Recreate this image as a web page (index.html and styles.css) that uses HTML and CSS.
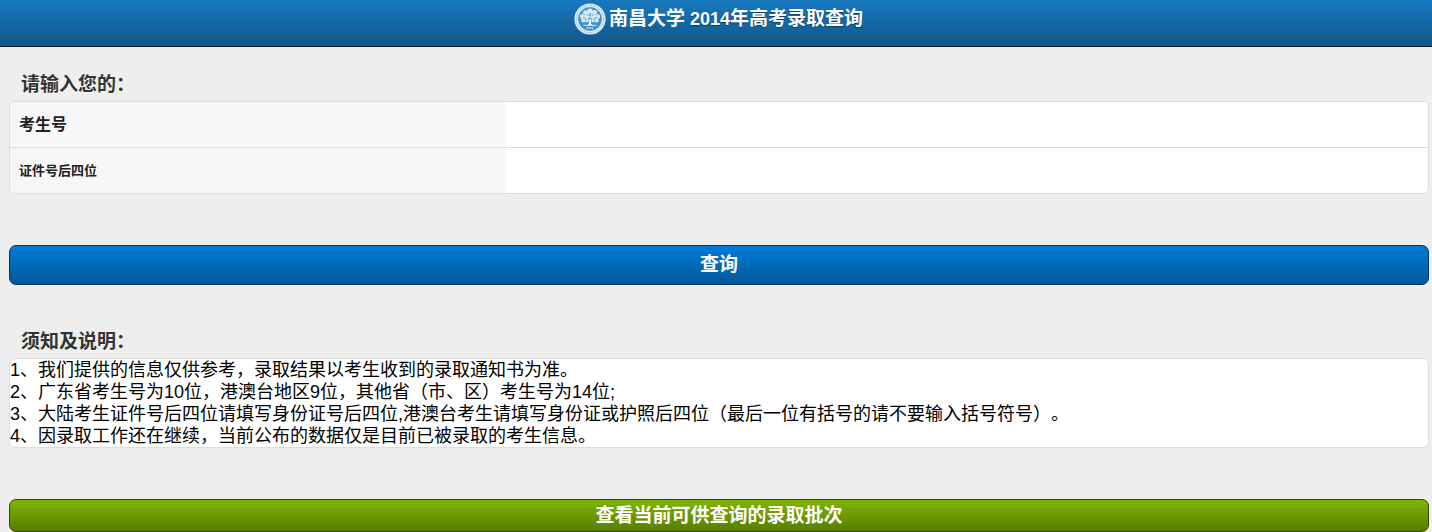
FILE: index.html
```html
<!DOCTYPE html>
<html lang="zh-CN">

<head>
    <meta charset="UTF-8">
    <meta name="viewport" content="width=device-width, initial-scale=1.0">
    <title>南昌大学2014年高考录取查询</title>
    <link rel="stylesheet" href="styles.css">
</head>

<body>
    <header class="header">
        <svg class="logo" viewBox="0 0 32 32" aria-hidden="true">
            <circle cx="16" cy="16" r="15.6" fill="#e4f3fb" />
            <circle cx="16" cy="16" r="13.7" fill="none" stroke="#8fc0e0" stroke-width="1.4" stroke-dasharray="1.4 1" />
            <circle cx="16" cy="16" r="11.7" fill="#3d8fc8" stroke="#5a9fcf" stroke-width="0.6" />
            <!-- tree crown -->
            <g fill="#d3eaf8">
                <circle cx="16" cy="8.4" r="2.8" />
                <circle cx="11.6" cy="9.8" r="2.6" />
                <circle cx="20.6" cy="9.6" r="2.6" />
                <circle cx="8.4" cy="13.6" r="2.5" />
                <circle cx="23.6" cy="13.6" r="2.5" />
                <circle cx="13" cy="13.6" r="2.8" />
                <circle cx="19" cy="13.4" r="2.8" />
                <circle cx="9.4" cy="17.4" r="2.2" />
                <circle cx="22.6" cy="17.4" r="2.2" />
                <circle cx="13" cy="17.6" r="1.8" />
                <circle cx="19" cy="17.6" r="1.8" />
            </g>
            <path d="M16 10v3M12.4 11.6l1.6 1.2M19.6 11.4l-1.8 1.4M9 14.4l2 .8M23 14.4l-2 .8M11 17l1.6-.8M21 17l-1.6-.8M14.4 15.4l1.6 1.4 1.6-1.4M9.6 11.6h1M21.6 11.6h1" fill="none" stroke="#3d8fc8" stroke-width="0.8" />
            <path d="M15.2 16h1.6l.4 5 2.4 1.4h-7.2l2.4-1.4z" fill="#eef8fe" />
            <path d="M9.4 22.4h13.2" fill="none" stroke="#d3eaf8" stroke-width="1" />
            <path d="M12.4 25h7.2" fill="none" stroke="#e4f3fb" stroke-width="1.4" stroke-dasharray="1.2 0.6" />
        </svg>
        <span class="school">南昌大学</span>
        <h1 class="title"><span class="year">2014</span>年高考录取查询</h1>
    </header>

    <main class="content">
        <form>
            <h2 class="list-title">请输入您的：</h2>
            <div class="panel">
                <div class="row">
                    <label for="ksh">考生号</label>
                    <input type="text" id="ksh" name="ksh">
                </div>
                <div class="row">
                    <label for="zjh" class="small">证件号后四位</label>
                    <input type="text" id="zjh" name="zjh">
                </div>
            </div>
            <button type="submit" class="btn btn-blue">查询</button>
        </form>

        <h2 class="list-title">须知及说明：</h2>
        <div class="panel">
            <p>1、我们提供的信息仅供参考，录取结果以考生收到的录取通知书为准。</p>
            <p>2、广东省考生号为10位，港澳台地区9位，其他省（市、区）考生号为14位;</p>
            <p>3、大陆考生证件号后四位请填写身份证号后四位,港澳台考生请填写身份证或护照后四位（最后一位有括号的请不要输入括号符号）。</p>
            <p>4、因录取工作还在继续，当前公布的数据仅是目前已被录取的考生信息。</p>
        </div>
        <button type="button" class="btn btn-green">查看当前可供查询的录取批次</button>
    </main>
</body>

</html>
```

FILE: styles.css
```css
* {
    box-sizing: border-box;
}

body {
    margin: 0;
    background-color: #eee;
    color: #000;
    font-family: "Liberation Sans", "Noto Sans CJK SC", sans-serif;
    font-size: 18px;
    line-height: 22px;
    text-spacing-trim: space-all;
}

h1,
h2,
p {
    margin: 0;
}

/* top bar */
.header {
    display: flex;
    justify-content: center;
    align-items: center;
    height: 47px;
    padding: 0 0 8px 5px;
    border-bottom: 1px solid #0a1a2a;
    background: linear-gradient(#1779be, #125688);
    color: #fff;
}

.logo {
    width: 32px;
    height: 32px;
    margin-right: 3px;
}

.school {
    margin-right: 5px;
    font-size: 19px;
    font-weight: bold;
}

.title {
    font-size: 19px;
    line-height: 22px;
    font-weight: bold;
    text-shadow: 0 1px 1px #0b3c62;
}

.year {
    font-size: 18px;
}

.content {
    padding: 27px 3px 0 9px;
}

.list-title {
    padding: 0 12px 5px;
    color: #333;
    font-size: 19px;
    line-height: 22px;
    text-shadow: 0 1px 0 #fff;
}

.panel {
    border: 1px solid #ddd;
    border-radius: 6px;
    background-color: #fff;
    overflow: hidden;
}

/* form rows */
.row {
    display: flex;
    height: 45px;
}

.row + .row {
    height: 46px;
    border-top: 1px solid #ddd;
}

.row label {
    flex: 0 0 35%;
    padding-left: 9px;
    background-color: #f7f7f7;
    color: #222;
    font-size: 16px;
    font-weight: bold;
    line-height: 45px;
}

.row label.small {
    font-size: 13px;
}

.row input {
    flex: 1;
    min-width: 0;
    padding: 0 10px;
    border: none;
    background-color: #fff;
    font: inherit;
}

/* buttons */
.btn {
    display: block;
    width: 100%;
    border-radius: 7px;
    color: #fff;
    font-family: inherit;
    font-size: 19px;
    font-weight: bold;
    line-height: 22px;
    cursor: pointer;
}

.btn-blue {
    height: 40px;
    margin: 51px 0 46px;
    padding: 0;
    border: 1px solid #0b3355;
    background: linear-gradient(#007cd6, #00589b);
}

.btn-green {
    height: 33px;
    margin-top: 51px;
    padding: 0;
    border: 1px solid #2f4700;
    background: linear-gradient(#80b500, #577d00);
}
```
